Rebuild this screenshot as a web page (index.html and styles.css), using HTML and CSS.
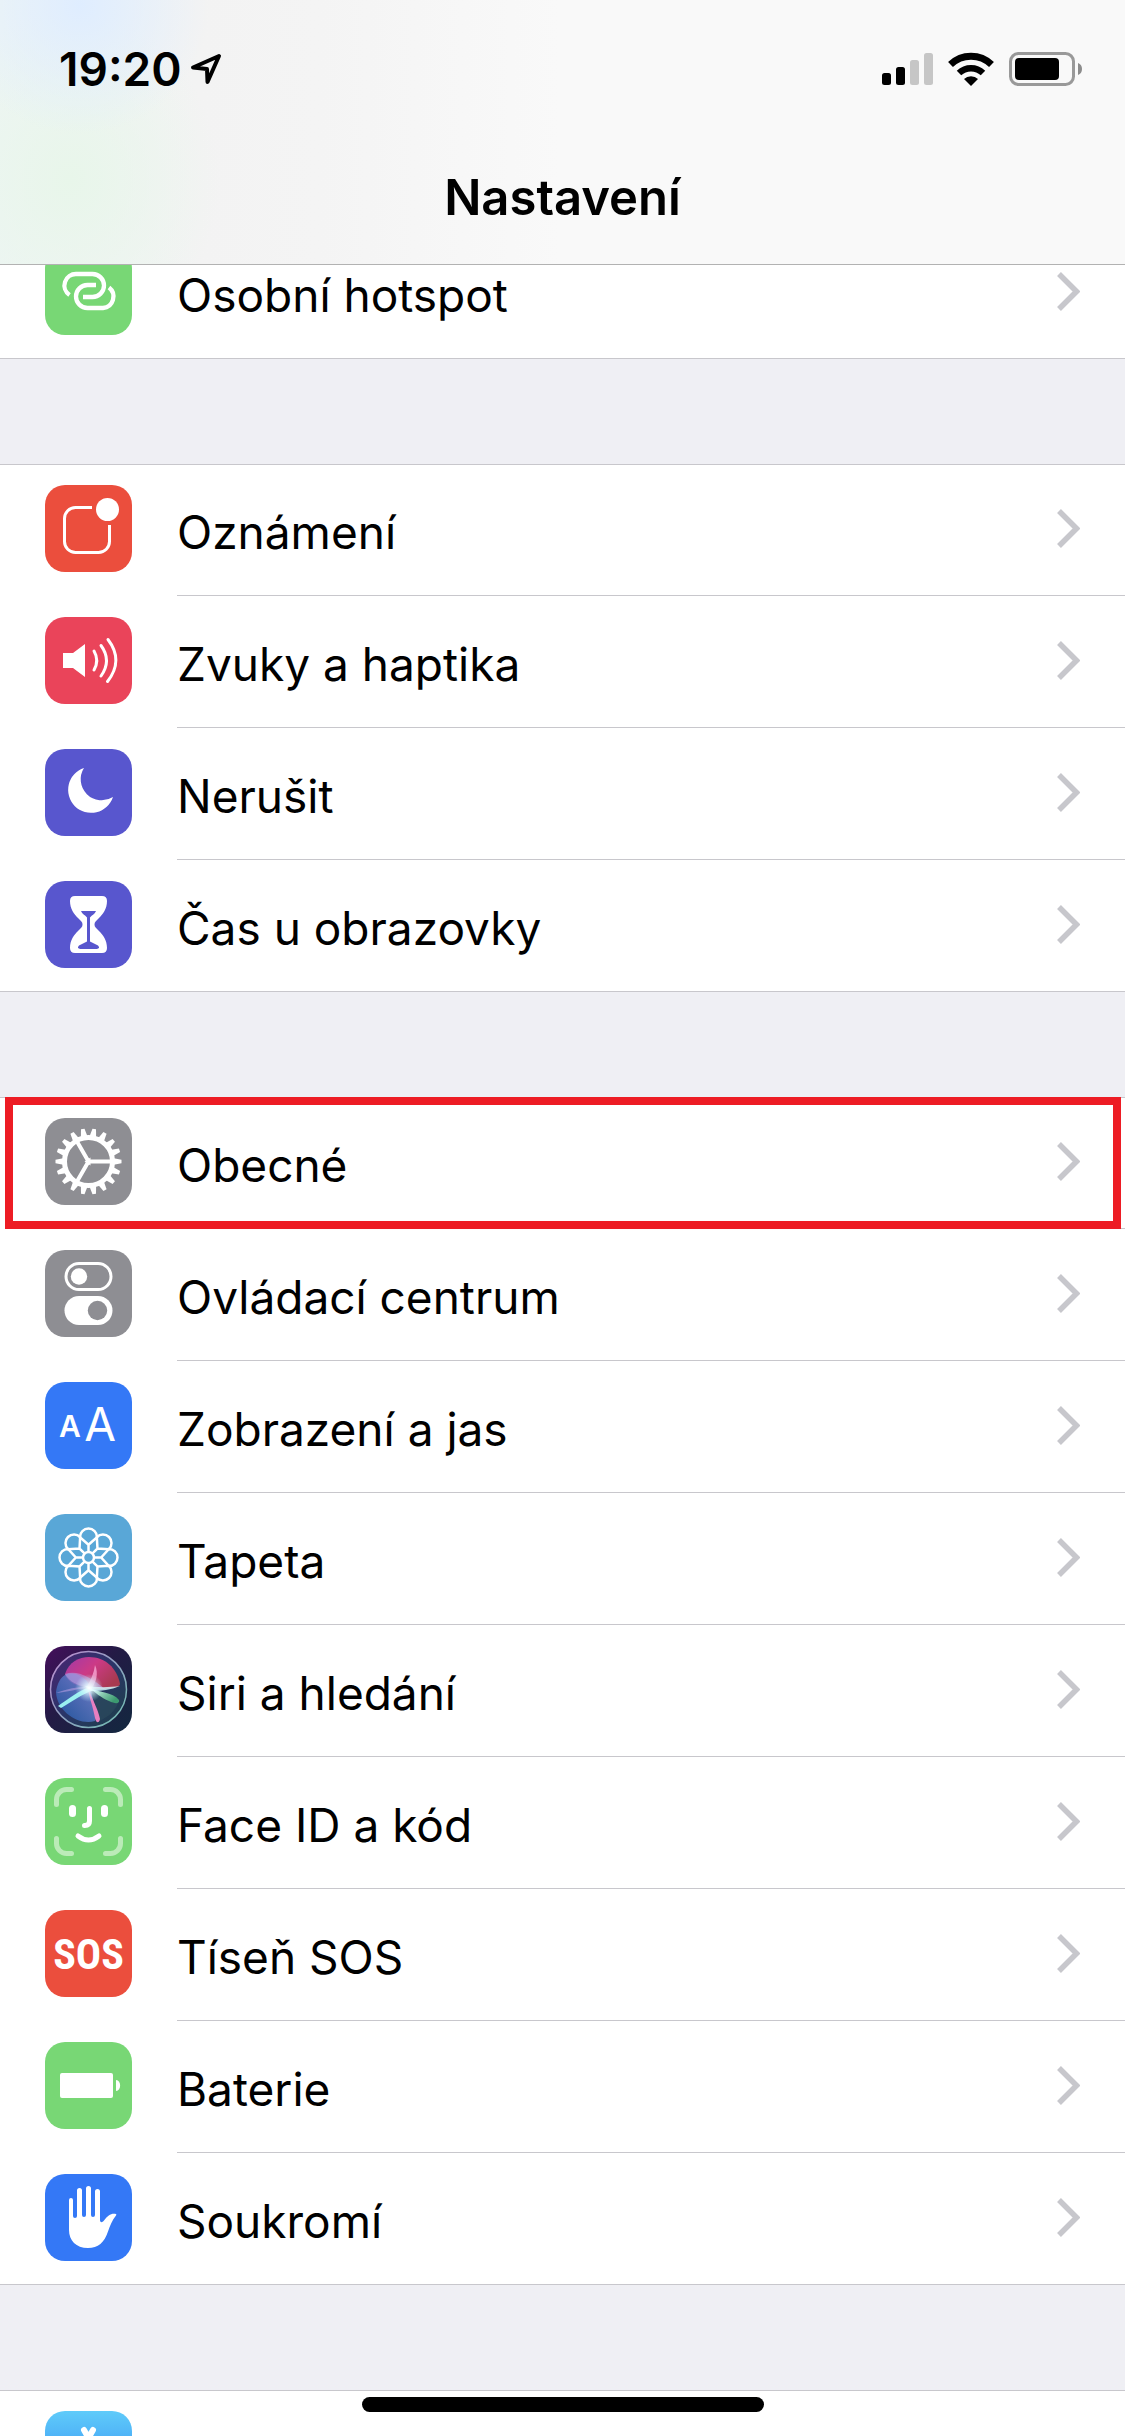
FILE: index.html
```
<!DOCTYPE html>
<html lang="cs">
<head>
    <meta charset="UTF-8">
    <meta name="viewport" content="width=device-width, initial-scale=1.0">
    <title>Nastavení</title>
    <link rel="stylesheet" href="styles.css">
</head>
<body>
    <svg class="sprite" aria-hidden="true">
        <symbol id="chevron" viewBox="0 0 23 39">
            <path d="M2 2 19.5 19.5 2 37" fill="none" stroke="#c7c7cc" stroke-width="5.5"/>
        </symbol>
    </svg>

    <header class="topbar">
        <div class="status">
            <span class="time">19:20</span>
            <svg class="location" width="32" height="32" viewBox="0 0 32 32">
                <path d="M29 3 3 14.5 17 16 17.5 29z" fill="none" stroke="#000" stroke-width="4" stroke-linejoin="round"/>
            </svg>
            <svg class="signal" width="51" height="34" viewBox="0 0 51 34">
                <rect x="0" y="21" width="9" height="12" rx="2.5"/>
                <rect x="14" y="15" width="9" height="18" rx="2.5"/>
                <rect x="28" y="8" width="9" height="25" rx="2.5" fill="#c6c6c6"/>
                <rect x="42" y="1" width="9" height="32" rx="2.5" fill="#c6c6c6"/>
            </svg>
            <svg class="wifi" width="46" height="34" viewBox="0 0 46 34">
                <path d="M2.5 12.5a29.5 29.5 0 0 1 41 0" fill="none" stroke="#000" stroke-width="7"/>
                <path d="M11 21a17.5 17.5 0 0 1 24 0" fill="none" stroke="#000" stroke-width="6.5"/>
                <path d="M16 27a10 10 0 0 1 14 0l-7 7z"/>
            </svg>
            <svg class="battery" width="73" height="34" viewBox="0 0 73 34">
                <rect x="1.5" y="1.5" width="63" height="31" rx="8" fill="none" stroke="#999" stroke-width="3"/>
                <rect x="6" y="6" width="44" height="22" rx="4"/>
                <path d="M69 11a6.5 6.5 0 0 1 0 12z" fill="#8c8c8c"/>
            </svg>
        </div>
        <h1 class="title">Nastavení</h1>
    </header>

    <main class="settings">
        <ul class="group">
            <li><a class="row" href="#">
                <svg class="icon green" viewBox="0 0 87 87">
                    <g fill="none" stroke="#fff" stroke-width="4.3">
                        <path d="M24.5 47A11.5 11.5 0 0 1 31.5 26H47.5A11.5 11.5 0 0 1 47.5 49H38"/>
                        <path d="M64 39.5A11.5 11.5 0 0 1 58 60H42.5A11.5 11.5 0 0 1 42.5 37H51"/>
                    </g>
                </svg>
                <span class="cell"><span class="label">Osobní hotspot</span><svg class="chevron"><use href="#chevron"/></svg></span>
            </a></li>
        </ul>

        <ul class="group">
            <li><a class="row" href="#">
                <svg class="icon red" viewBox="0 0 87 87">
                    <path d="M64.5 40V56.5a11 11 0 0 1-11 11H30.5a11 11 0 0 1-11-11V33.5a11 11 0 0 1 11-11H47" fill="none" stroke="#fff" stroke-width="3"/>
                    <circle cx="62.5" cy="24.5" r="11.5" fill="#fff"/>
                </svg>
                <span class="cell"><span class="label">Oznámení</span><svg class="chevron"><use href="#chevron"/></svg></span>
            </a></li>
            <li><a class="row" href="#">
                <svg class="icon pink" viewBox="0 0 87 87">
                    <path d="M18 36H28L40 27V60L28 51H18z" fill="#fff"/>
                    <path d="M49 34Q54.5 43.5 49 53M56 28.5Q67 43.5 56 59M63 22.5Q79 43.5 62.5 64.5" fill="none" stroke="#fff" stroke-width="3" stroke-linecap="round"/>
                </svg>
                <span class="cell"><span class="label">Zvuky a haptika</span><svg class="chevron"><use href="#chevron"/></svg></span>
            </a></li>
            <li><a class="row" href="#">
                <svg class="icon purple" viewBox="0 0 87 87">
                    <path d="M39 19A23 23 0 1 0 68 48A21 21 0 0 1 39 19z" fill="#fff"/>
                </svg>
                <span class="cell"><span class="label">Nerušit</span><svg class="chevron"><use href="#chevron"/></svg></span>
            </a></li>
            <li><a class="row" href="#">
                <svg class="icon purple" viewBox="0 0 87 87">
                    <path d="M30 15H57q5 0 5 5c0 8-4 13-8 17-3 3-4.5 4-4.5 6.5s1.5 3.5 4.5 6.5c4 4 8 9 8 17q0 5-5 5H30q-5 0-5-5c0-8 4-13 8-17 3-3 4.5-4 4.5-6.5s-1.5-3.5-4.5-6.5c-4-4-8-9-8-17q0-5 5-5z" fill="#fff"/>
                    <path d="M36 30H51C50 33 47 34 45 36.5V60.5L53 64.5Q54.5 66 54 67L52 68H35L33 67Q32.5 66 34 64.5L42 60.5V36.5C40 34 37 33 36 30z" fill="#5856ce"/>
                </svg>
                <span class="cell"><span class="label">Čas u obrazovky</span><svg class="chevron"><use href="#chevron"/></svg></span>
            </a></li>
        </ul>

        <ul class="group">
            <li><a class="row marked" href="#">
                <svg class="icon gray" viewBox="0 0 87 87">
                    <defs>
                        <path id="tooth" d="M24-3.5 33-1.8V1.8L24 3.5z"/>
                        <g id="teeth">
                            <use href="#tooth"/>
                            <use href="#tooth" transform="rotate(20)"/>
                            <use href="#tooth" transform="rotate(40)"/>
                        </g>
                    </defs>
                    <g transform="translate(43.5 43.5)" fill="#fff">
                        <use href="#teeth"/>
                        <use href="#teeth" transform="rotate(60)"/>
                        <use href="#teeth" transform="rotate(120)"/>
                        <use href="#teeth" transform="rotate(180)"/>
                        <use href="#teeth" transform="rotate(240)"/>
                        <use href="#teeth" transform="rotate(300)"/>
                        <circle r="24" fill="none" stroke="#fff" stroke-width="5"/>
                        <path d="M0 0H23M0 0-11.5-20M0 0-11.5 20" fill="none" stroke="#fff" stroke-width="4"/>
                        <path d="M-4 0 2-4 2 4z"/>
                    </g>
                </svg>
                <span class="cell"><span class="label">Obecné</span><svg class="chevron"><use href="#chevron"/></svg></span>
            </a></li>
            <li><a class="row" href="#">
                <svg class="icon gray" viewBox="0 0 87 87">
                    <rect x="21" y="13.5" width="45" height="26" rx="13" fill="none" stroke="#fff" stroke-width="3"/>
                    <circle cx="34" cy="26.5" r="8.2" fill="#fff"/>
                    <rect x="19.5" y="46" width="48" height="29" rx="14.5" fill="#fff"/>
                    <circle cx="52.5" cy="60.5" r="9.7" fill="#8e8e93"/>
                </svg>
                <span class="cell"><span class="label">Ovládací centrum</span><svg class="chevron"><use href="#chevron"/></svg></span>
            </a></li>
            <li><a class="row" href="#">
                <svg class="icon blue" viewBox="0 0 87 87">
                    <text class="small-a" x="25" y="55">A</text>
                    <text class="big-a" x="55" y="59">A</text>
                </svg>
                <span class="cell"><span class="label">Zobrazení a jas</span><svg class="chevron"><use href="#chevron"/></svg></span>
            </a></li>
            <li><a class="row" href="#">
                <svg class="icon sky" viewBox="0 0 87 87">
                    <defs>
                        <path id="petal" d="M0-12.7-8.6-20.4A8.6 8.6 0 0 1 8.6-20.4ZM0-5V-14"/>
                    </defs>
                    <g transform="translate(43.5 43.5)" fill="none" stroke="#fff" stroke-width="2.5">
                        <circle r="5.5"/>
                        <use href="#petal"/>
                        <use href="#petal" transform="rotate(45)"/>
                        <use href="#petal" transform="rotate(90)"/>
                        <use href="#petal" transform="rotate(135)"/>
                        <use href="#petal" transform="rotate(180)"/>
                        <use href="#petal" transform="rotate(225)"/>
                        <use href="#petal" transform="rotate(270)"/>
                        <use href="#petal" transform="rotate(315)"/>
                    </g>
                </svg>
                <span class="cell"><span class="label">Tapeta</span><svg class="chevron"><use href="#chevron"/></svg></span>
            </a></li>
            <li><a class="row" href="#">
                <svg class="icon siri" viewBox="0 0 87 87">
                    <defs>
                        <linearGradient id="rim" x1="0" y1="0" x2="1" y2="1">
                            <stop offset="0" stop-color="#c08bd0"/>
                            <stop offset="0.5" stop-color="#8fa0c0"/>
                            <stop offset="1" stop-color="#6fc0b0"/>
                        </linearGradient>
                        <linearGradient id="orb" x1="0" y1="0" x2="1" y2="1">
                            <stop offset="0" stop-color="#4a2372"/>
                            <stop offset="0.5" stop-color="#2a3568"/>
                            <stop offset="1" stop-color="#1c4048"/>
                        </linearGradient>
                        <linearGradient id="pinkGlow" x1="0" y1="0" x2="1" y2="0.6">
                            <stop offset="0" stop-color="#a03aa8"/>
                            <stop offset="0.5" stop-color="#cc3a86"/>
                            <stop offset="1" stop-color="#a83a50"/>
                        </linearGradient>
                        <linearGradient id="blueGlow" x1="1" y1="0" x2="0" y2="1">
                            <stop offset="0" stop-color="#8a8fe0"/>
                            <stop offset="1" stop-color="#1c5aa8"/>
                        </linearGradient>
                        <linearGradient id="greenFin" x1="0" y1="0" x2="1" y2="0.5">
                            <stop offset="0" stop-color="#e0fff8"/>
                            <stop offset="1" stop-color="#3c9a70"/>
                        </linearGradient>
                        <radialGradient id="spark">
                            <stop offset="0" stop-color="#fff"/>
                            <stop offset="0.3" stop-color="#e6fbff" stop-opacity="0.8"/>
                            <stop offset="1" stop-color="#bfefff" stop-opacity="0"/>
                        </radialGradient>
                    </defs>
                    <circle cx="43.5" cy="43.5" r="38" fill="url(#orb)" stroke="url(#rim)" stroke-width="1.5"/>
                    <path d="M20 28C24 16 34 11 44 11 60 11 72 22 75 38 74 43 58 43 44 43 32 40 22 36 20 28z" fill="url(#pinkGlow)"/>
                    <path d="M20 29C30 24 44 32 46 44 48 56 52 68 50 75 34 80 12 66 11 46 12 38 15 32 20 29z" fill="url(#blueGlow)" opacity="0.8"/>
                    <path d="M46 44C60 46 70 50 74 54 72 64 62 72 54 75 52 64 50 54 46 44z" fill="#2b4a5c" opacity="0.7"/>
                    <path d="M20 28C32 24 44 30 60 43 44 40 30 40 11 47 24 46 34 42 44 42 34 40 24 36 20 28z" fill="#b39be0" opacity="0.6"/>
                    <path d="M44 42C52 46 68 46 74 54 75 58 70 58 64 55 56 52 50 46 44 42z" fill="url(#greenFin)"/>
                    <path d="M43 42C48 54 54 66 55 73 54 78 51 77 50 72 48 60 44 52 43 42z" fill="#e87fc0"/>
                    <path d="M45 41C34 44 22 54 13 60L16 62C26 56 38 48 48 44z" fill="#9af0f0"/>
                    <path d="M41 42C46 34 49 27 50 19 54 28 51 36 46 44z" fill="#ffb5e0" opacity="0.7"/>
                    <path d="M40 40C56 42 66 41 75 40 66 44 56 45 46 45z" fill="#d8ffff" opacity="0.8"/>
                    <circle cx="44" cy="42" r="14" fill="url(#spark)"/>
                </svg>
                <span class="cell"><span class="label">Siri a hledání</span><svg class="chevron"><use href="#chevron"/></svg></span>
            </a></li>
            <li><a class="row" href="#">
                <svg class="icon green" viewBox="0 0 87 87">
                    <path d="M11.5 26.5V21.5a10 10 0 0 1 10-10H26.5M60.5 11.5H65.5a10 10 0 0 1 10 10V26.5M75.5 60.5V65.5a10 10 0 0 1-10 10H60.5M26.5 75.5H21.5a10 10 0 0 1-10-10V60.5" fill="none" stroke="#bbebb8" stroke-width="5" stroke-linecap="round"/>
                    <rect x="24" y="27" width="7" height="12" rx="3.5" fill="#fff"/>
                    <rect x="56" y="27" width="7" height="12" rx="3.5" fill="#fff"/>
                    <path d="M44.5 30.5V43q0 4.5-4.5 4.5h-.5M33 58Q43.5 66 54 58" fill="none" stroke="#fff" stroke-width="5" stroke-linecap="round"/>
                </svg>
                <span class="cell"><span class="label">Face ID a kód</span><svg class="chevron"><use href="#chevron"/></svg></span>
            </a></li>
            <li><a class="row" href="#">
                <svg class="icon red" viewBox="0 0 87 87">
                    <text class="sos" x="43.5" y="59">SOS</text>
                </svg>
                <span class="cell"><span class="label">Tíseň SOS</span><svg class="chevron"><use href="#chevron"/></svg></span>
            </a></li>
            <li><a class="row" href="#">
                <svg class="icon green" viewBox="0 0 87 87">
                    <rect x="15" y="31" width="53" height="25" rx="2" fill="#fff"/>
                    <path d="M71 38c5.5 0 5.5 11 0 11z" fill="#fff"/>
                </svg>
                <span class="cell"><span class="label">Baterie</span><svg class="chevron"><use href="#chevron"/></svg></span>
            </a></li>
            <li><a class="row" href="#">
                <svg class="icon blue" viewBox="0 0 87 87">
                    <path d="M24 26a2 2 0 0 1 4 0V42a2 2 0 0 0 4 0V16.5a2.5 2.5 0 0 1 5 0V41a2 2 0 0 0 4 0V14.5a2.5 2.5 0 0 1 5 0V41a2 2 0 0 0 4 0V17.5a2.5 2.5 0 0 1 5 0V46c0 2.5 2 3 4 .5 4-5 7-7.5 12-6.5q.8.5 0 1.5c-4 5-6 10-8 16C59.5 68.5 53 74 43 74 31 74 24 66.5 24 56z" fill="#fff"/>
                </svg>
                <span class="cell"><span class="label">Soukromí</span><svg class="chevron"><use href="#chevron"/></svg></span>
            </a></li>
        </ul>

        <ul class="group">
            <li><a class="row" href="#">
                <svg class="icon store" viewBox="0 0 87 87">
                    <path d="M39 19 60 56M48 19 27 56" fill="none" stroke="#fff" stroke-width="6" stroke-linecap="round"/>
                </svg>
                <span class="cell"></span>
            </a></li>
        </ul>
    </main>

    <div class="home-bar"></div>
</body>
</html>
```
FILE: styles.css
```
*
{
    box-sizing: border-box;
}
body
{
    margin: 0;
    height: 100vh;
    overflow: hidden;
    background-color: #efeff4;
    color: black;
    font-family: Inter, "Liberation Sans", sans-serif;
}
.sprite
{
    display: none;
}

.topbar
{
    position: fixed;
    top: 0;
    left: 0;
    right: 0;
    z-index: 1;
    border-bottom: 1px solid #b2b2b2;
    background:
        radial-gradient(circle at 80px 5px, #dfedff, rgba(223,237,255,0) 130px),
        radial-gradient(ellipse 150px 170px at 70px 180px, #e8f6ea, rgba(232,246,234,0)),
        linear-gradient(to right, #eef5f4, #f3f3f3 200px, #f4f4f4 320px, #f9f9f9 560px);
}
.status
{
    display: flex;
    align-items: center;
    height: 138px;
    padding: 0 43px 0 59px;
}
.time
{
    font-size: 46px;
    font-weight: 600;
}
.location
{
    margin-left: 8px;
}
.signal
{
    margin-left: auto;
}
.wifi
{
    margin-left: 15px;
}
.battery
{
    margin-left: 15px;
}
.title
{
    margin: 0;
    height: 126px;
    font-size: 49px;
    font-weight: 600;
    line-height: 120px;
    text-align: center;
}

.settings
{
    display: flex;
    flex-direction: column;
    gap: 105px;
    padding-top: 227px;
}
.group
{
    margin: 0;
    padding: 0;
    list-style: none;
    background-color: white;
    box-shadow: inset 0 1px #c8c7cc, inset 0 -1px #c8c7cc;
}
.row
{
    position: relative;
    display: flex;
    gap: 45px;
    padding-left: 45px;
    min-height: 132px;
    color: black;
    text-decoration: none;
}
.cell
{
    flex: 1;
    display: flex;
    align-items: center;
    justify-content: space-between;
    padding: 0 45px 2px 0;
    border-bottom: 1px solid #c8c7cc;
}
li:last-child .cell
{
    border-bottom-color: transparent;
}
.label
{
    padding-top: 6px;
    font-size: 46px;
}
.chevron
{
    width: 23px;
    height: 39px;
}
.marked::after
{
    content: "";
    position: absolute;
    inset: 0 4px 0 5px;
    border: 8px solid #ed1c24;
}

.icon
{
    width: 87px;
    height: 87px;
    margin-top: 21px;
    border-radius: 20px;
}
.green
{
    background-color: #78d775;
}
.red
{
    background-color: #eb4e3d;
}
.pink
{
    background-color: #ea445a;
}
.purple
{
    background-color: #5856ce;
}
.gray
{
    background-color: #8e8e93;
}
.blue
{
    background-color: #3478f6;
}
.sky
{
    background-color: #59a7d7;
}
.siri
{
    background: linear-gradient(to bottom right, #450f5c, #231b45 45%, #12283f);
}
.store
{
    background: linear-gradient(#5fcbfa, #2a7bf0);
}
.icon text
{
    fill: white;
    text-anchor: middle;
}
.small-a
{
    font-size: 30px;
    font-weight: 600;
}
.big-a
{
    font-size: 46px;
    font-weight: 400;
}
.sos
{
    font-family: "Liberation Sans Narrow", "Roboto Condensed", "Liberation Sans", sans-serif;
    font-size: 42px;
    font-weight: 700;
}

.home-bar
{
    position: fixed;
    bottom: 24px;
    left: 50%;
    width: 402px;
    height: 15px;
    margin-left: -201px;
    border-radius: 8px;
    background-color: black;
}
```
